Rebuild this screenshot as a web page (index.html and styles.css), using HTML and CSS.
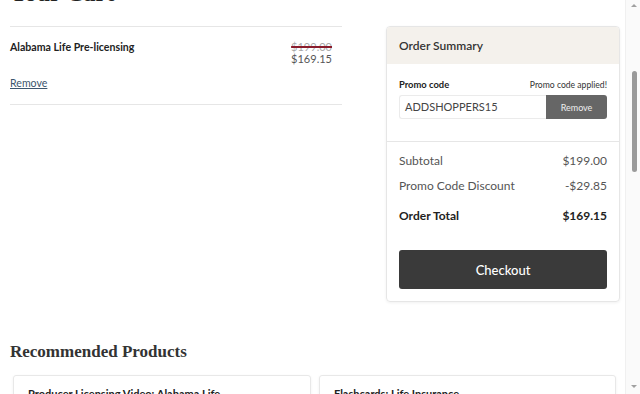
FILE: index.html
```html
<!DOCTYPE html>
<html>
<head>
<meta charset="utf-8">
<link rel="stylesheet" href="styles.css">
</head>
<body>
<div class="page">
  <h1 class="cart-title">Your Cart</h1>
  <div class="layout">
    <div class="cart-items">
      <div class="item">
        <div class="item-main">
          <div class="item-name">Alabama Life Pre-licensing</div>
          <a class="remove-link" href="#">Remove</a>
        </div>
        <div class="item-price">
          <div class="old-price">$199.00</div>
          <div class="new-price">$169.15</div>
        </div>
      </div>
    </div>
    <div class="summary">
      <div class="summary-head">Order Summary</div>
      <div class="promo">
        <div class="promo-labels">
          <span class="promo-label">Promo code</span>
          <span class="promo-applied">Promo code applied!</span>
        </div>
        <div class="promo-row">
          <div class="promo-input">ADDSHOPPERS15</div>
          <button class="promo-btn">Remove</button>
        </div>
      </div>
      <div class="totals">
        <div class="line"><span>Subtotal</span><span>$199.00</span></div>
        <div class="line"><span>Promo Code Discount</span><span>-$29.85</span></div>
        <div class="line total"><span>Order Total</span><span>$169.15</span></div>
        <button class="checkout">Checkout</button>
      </div>
    </div>
  </div>
  <h2 class="rec-title">Recommended Products</h2>
  <div class="rec-grid">
    <div class="rec-card"><div class="rec-name">Producer Licensing Video: Alabama Life</div></div>
    <div class="rec-card"><div class="rec-name">Flashcards: Life Insurance</div></div>
  </div>
</div>
<div class="scrollbar">
  <div class="arrow up"></div>
  <div class="thumb"></div>
  <div class="arrow down"></div>
</div>
</body>
</html>
```
FILE: styles.css
```css
html, body {
  margin: 0;
  padding: 0;
  overflow: hidden;
  background: #fff;
}
body {
  font-family: Lato, "Open Sans", sans-serif;
  color: #333;
  height: 394px;
}
.page {
  width: 625px;
  padding: 0 0 0 10px;
  box-sizing: border-box;
}
.cart-title {
  font-family: "Liberation Serif", serif;
  font-weight: bold;
  font-size: 24px;
  line-height: 24px;
  margin: -19px 0 21px 0;
  color: #222;
}
.layout {
  display: flex;
  gap: 44px;
  align-items: flex-start;
}
.cart-items {
  width: 332px;
  border-top: 1px solid #e6e6e6;
  border-bottom: 1px solid #e6e6e6;
}
.item {
  display: flex;
  justify-content: space-between;
  padding: 13px 10px 14px 0;
}
.item-name {
  font-size: 10.6px;
  font-weight: bold;
  color: #222;
  line-height: 14px;
}
.remove-link {
  display: inline-block;
  margin-top: 22px;
  font-size: 10.6px;
  line-height: 14px;
  color: #3c566e;
  text-decoration: underline;
}
.item-price {
  text-align: right;
  font-size: 11px;
  line-height: 12px;
}
.old-price {
  color: #a9a9a9;
  text-decoration: line-through;
  text-decoration-color: #8a1c2c;
  text-decoration-thickness: 1.5px;
  margin-top: 1px;
}
.new-price {
  color: #555;
}
.summary {
  width: 234px;
  box-sizing: border-box;
  border: 1px solid #e6e6e6;
  border-radius: 4px;
  box-shadow: 0 1px 3px rgba(0,0,0,0.06);
  overflow: hidden;
}
.summary-head {
  background: #f4f1ec;
  height: 37px;
  line-height: 37px;
  padding-left: 12px;
  font-size: 12px;
  font-weight: 600;
  color: #333;
}
.promo {
  padding: 15px 12px 22px 12px;
  border-bottom: 1px solid #e6e6e6;
}
.promo-labels {
  display: flex;
  justify-content: space-between;
  align-items: baseline;
  line-height: 12px;
  margin-bottom: 4px;
}
.promo-label {
  font-size: 9.4px;
  font-weight: bold;
  color: #222;
}
.promo-applied {
  font-size: 8.6px;
  color: #333;
}
.promo-row {
  display: flex;
  height: 24px;
}
.promo-input {
  flex: 1;
  border: 1px solid #ebebeb;
  border-right: none;
  border-radius: 3px 0 0 3px;
  font-size: 11px;
  color: #444;
  line-height: 22px;
  padding-left: 5px;
}
.promo-btn {
  width: 61px;
  border: none;
  background: #666;
  color: #eee;
  font-family: Lato, sans-serif;
  font-size: 9px;
  border-radius: 0 3px 3px 0;
  padding: 0;
}
.totals {
  padding: 11px 12px 12px 12px;
}
.line {
  display: flex;
  justify-content: space-between;
  font-size: 12px;
  color: #555;
  line-height: 16px;
  margin-bottom: 9px;
}
.line.total {
  font-weight: bold;
  color: #222;
  margin-top: 14px;
  margin-bottom: 0;
}
.checkout {
  display: block;
  width: 100%;
  height: 39px;
  margin-top: 26px;
  border: none;
  border-radius: 3px;
  background: #3a3a3a;
  color: #fff;
  font-family: Lato, sans-serif;
  font-size: 13px;
  font-weight: 500;
}
.rec-title {
  font-family: "Liberation Serif", serif;
  font-weight: bold;
  font-size: 17px;
  line-height: 20px;
  color: #333;
  margin: 40px 0 13px 0;
}
.rec-grid {
  display: grid;
  grid-template-columns: 298px 297px;
  gap: 8px;
  padding-left: 3px;
}
.rec-card {
  height: 60px;
  border: 1px solid #e8e8e8;
  border-radius: 3px;
  box-shadow: 0 1px 3px rgba(0,0,0,0.06);
  padding: 11px 14px;
  box-sizing: border-box;
}
.rec-name {
  font-size: 11px;
  font-weight: bold;
  color: #222;
}
.scrollbar {
  position: fixed;
  top: 0;
  right: 0;
  width: 15px;
  height: 394px;
  background: #fafafa;
  border-left: 1px solid #f0f0f0;
  box-sizing: border-box;
}
.thumb {
  position: absolute;
  left: 6px;
  top: 71px;
  width: 5px;
  height: 101px;
  border-radius: 3px;
  background: #9a9a9a;
}
.arrow {
  position: absolute;
  left: 5px;
  width: 0;
  height: 0;
  border-left: 3px solid transparent;
  border-right: 3px solid transparent;
}
.arrow.up {
  top: 4px;
  border-bottom: 3px solid #a0a0a0;
}
.arrow.down {
  top: 385px;
  border-top: 3px solid #a0a0a0;
}
```
